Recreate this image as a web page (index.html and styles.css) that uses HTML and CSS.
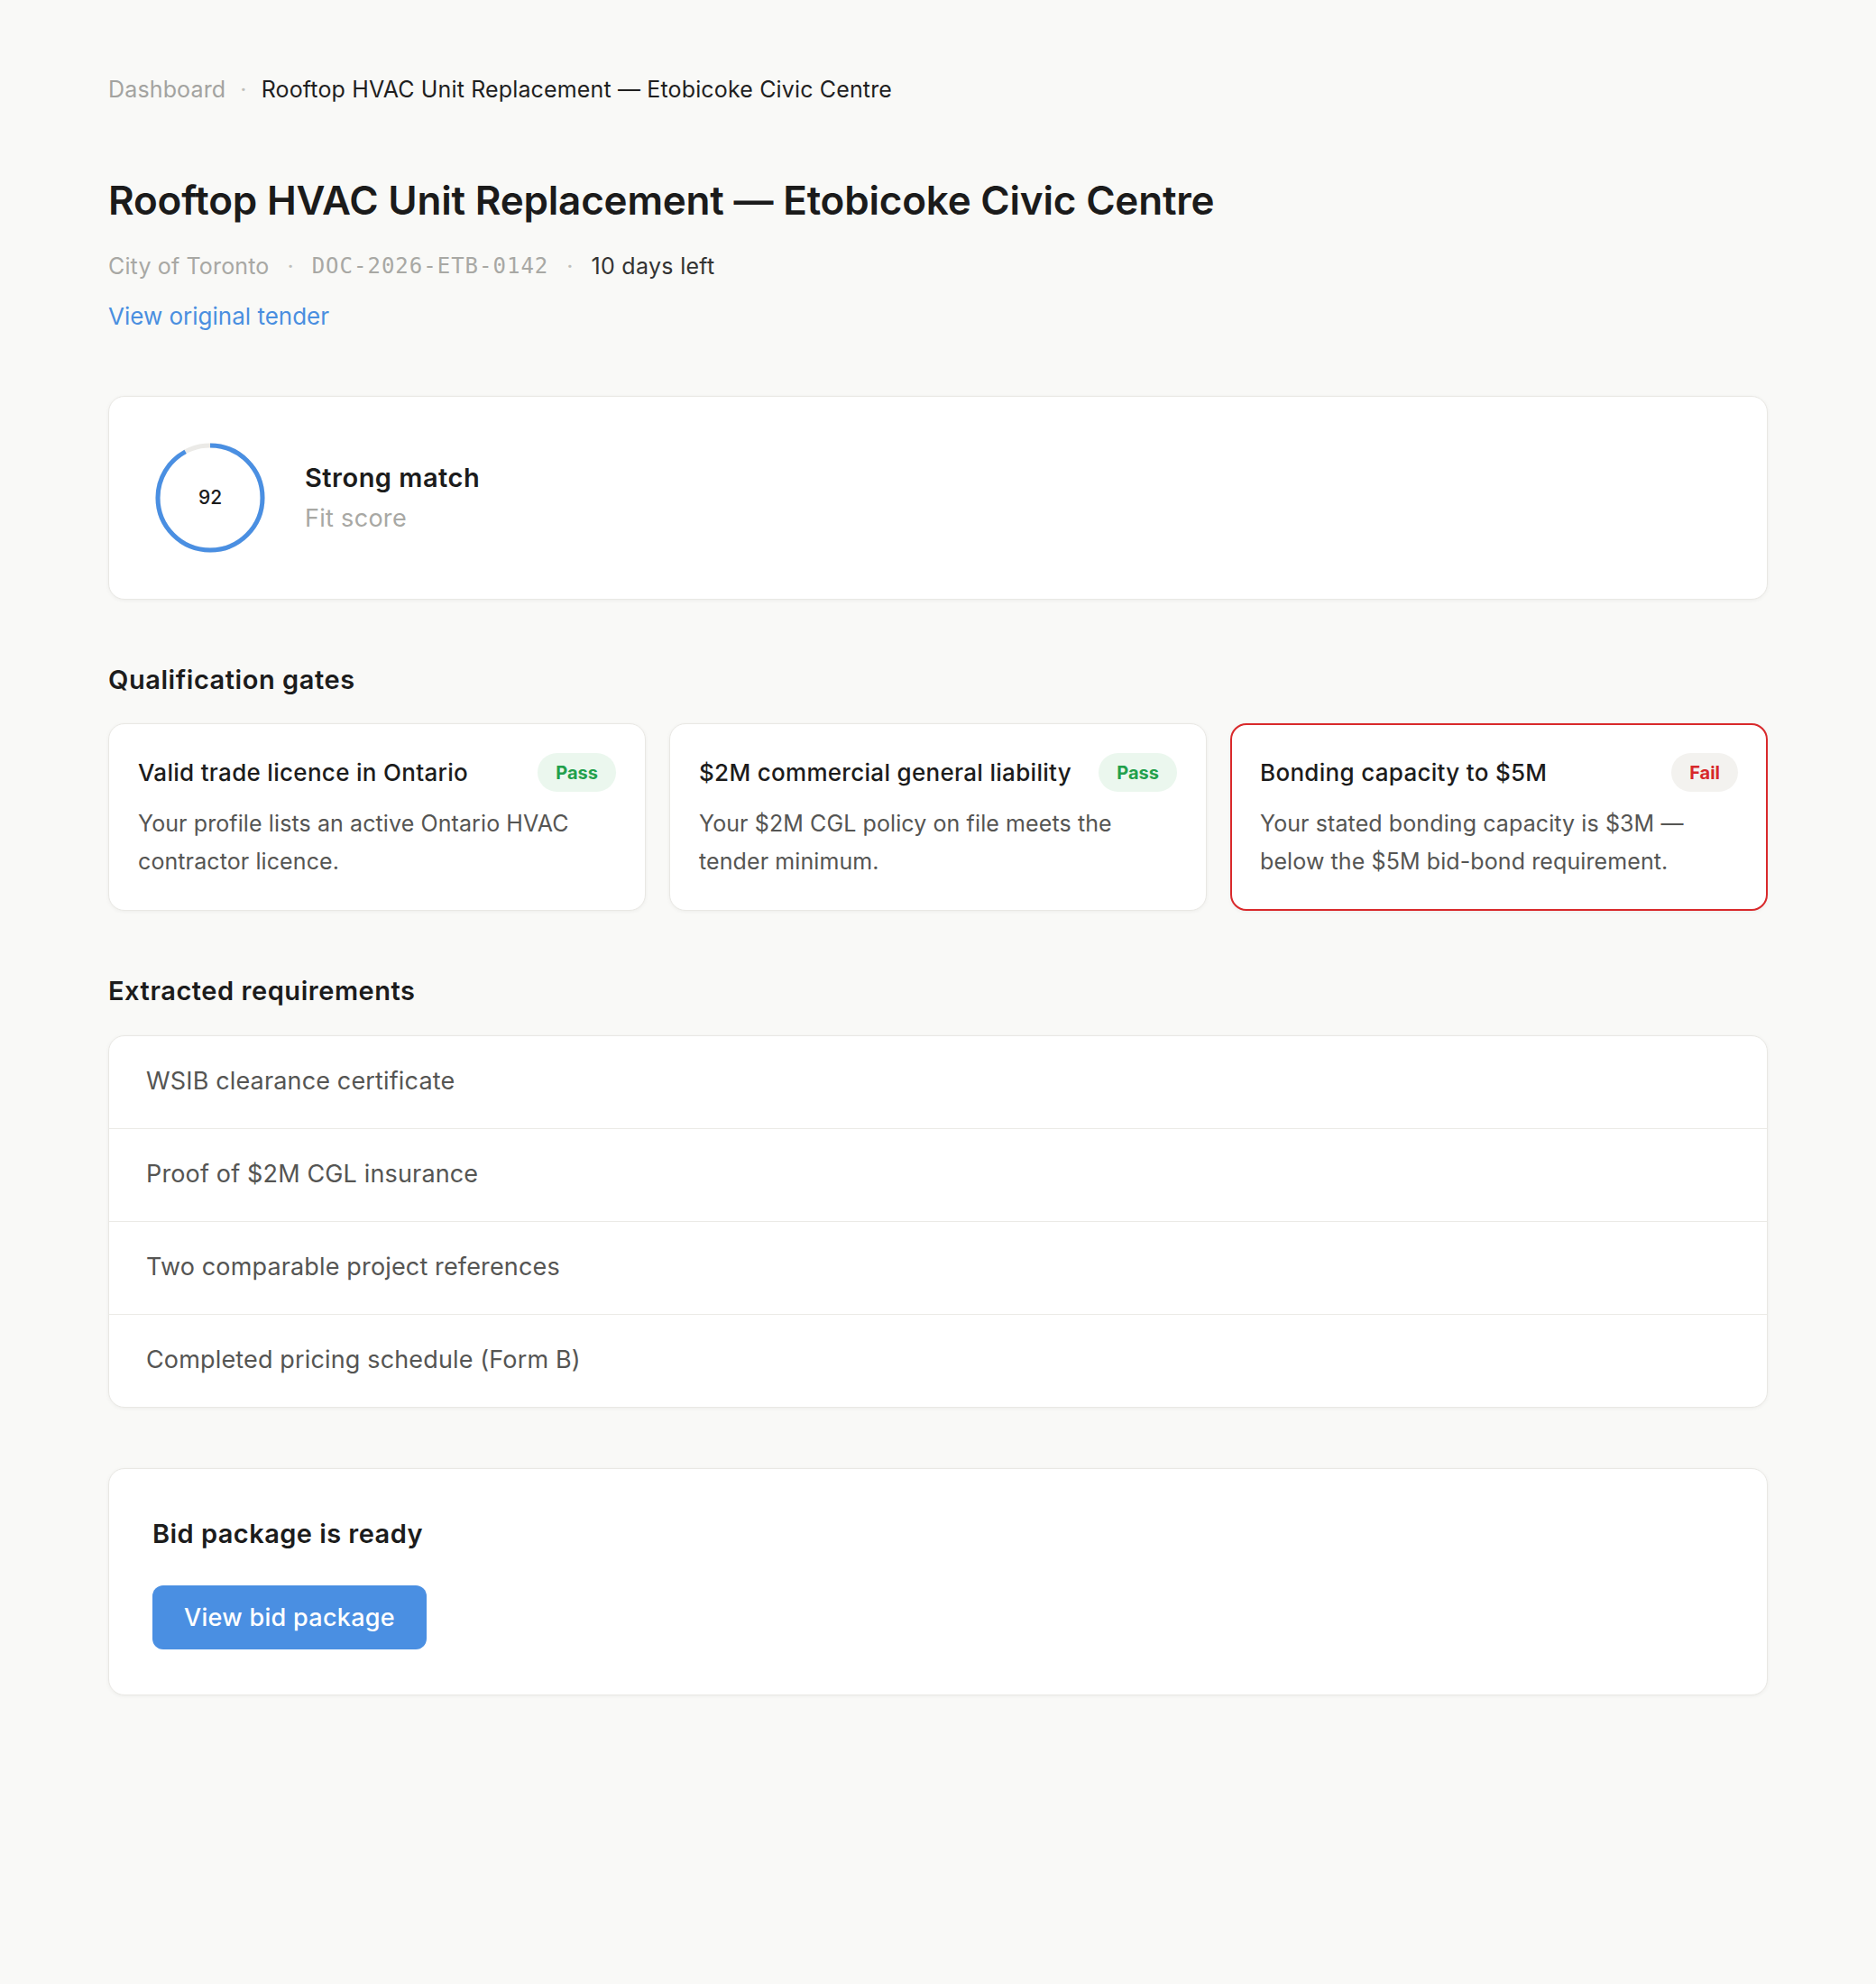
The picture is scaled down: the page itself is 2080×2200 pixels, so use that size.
FILE: index.html
```html
<!DOCTYPE html>
<html lang="en">
<head>
<meta charset="utf-8">
<title>Rooftop HVAC Unit Replacement — Etobicoke Civic Centre</title>
<link rel="stylesheet" href="styles.css">
</head>
<body>
<main class="page">
  <nav class="breadcrumb">
    <a class="crumb-link" href="#">Dashboard</a>
    <span class="dot">·</span>
    <span class="crumb-current">Rooftop HVAC Unit Replacement — Etobicoke Civic Centre</span>
  </nav>

  <h1 class="title">Rooftop HVAC Unit Replacement — Etobicoke Civic Centre</h1>

  <div class="meta">
    <span class="meta-org">City of Toronto</span>
    <span class="dot">·</span>
    <span class="meta-id">DOC-2026-ETB-0142</span>
    <span class="dot">·</span>
    <span class="meta-days">10 days left</span>
  </div>

  <a class="tender-link" href="#">View original tender</a>

  <section class="card score-card">
    <div class="ring">
      <svg class="ring-svg" width="122" height="122" viewBox="0 0 122 122">
        <circle cx="61" cy="61" r="58" fill="none" stroke="#ebeae7" stroke-width="5"/>
        <circle cx="61" cy="61" r="58" fill="none" stroke="#4a8fe2" stroke-width="5"
          stroke-dasharray="335.3 364.4" transform="rotate(-90 61 61)"/>
      </svg>
      <span class="ring-value">92</span>
    </div>
    <div class="score-text">
      <div class="score-label">Strong match</div>
      <div class="score-sub">Fit score</div>
    </div>
  </section>

  <h2 class="section-title">Qualification gates</h2>
  <div class="gates">
    <article class="card gate">
      <div class="gate-head">
        <h3 class="gate-title">Valid trade licence in Ontario</h3>
        <span class="badge badge-pass">Pass</span>
      </div>
      <p class="gate-desc">Your profile lists an active Ontario HVAC contractor licence.</p>
    </article>
    <article class="card gate">
      <div class="gate-head">
        <h3 class="gate-title">$2M commercial general liability</h3>
        <span class="badge badge-pass">Pass</span>
      </div>
      <p class="gate-desc">Your $2M CGL policy on file meets the tender minimum.</p>
    </article>
    <article class="card gate gate-fail">
      <div class="gate-head">
        <h3 class="gate-title">Bonding capacity to $5M</h3>
        <span class="badge badge-fail">Fail</span>
      </div>
      <p class="gate-desc">Your stated bonding capacity is $3M — below the $5M bid-bond requirement.</p>
    </article>
  </div>

  <h2 class="section-title">Extracted requirements</h2>
  <ul class="card req-list">
    <li class="req">WSIB clearance certificate</li>
    <li class="req">Proof of $2M CGL insurance</li>
    <li class="req">Two comparable project references</li>
    <li class="req">Completed pricing schedule (Form B)</li>
  </ul>

  <section class="card bid-card">
    <h2 class="bid-title">Bid package is ready</h2>
    <button class="btn-primary" type="button">View bid package</button>
  </section>
</main>
</body>
</html>
```

FILE: styles.css
```css
* { box-sizing: border-box; }

html, body {
  margin: 0;
  padding: 0;
  background: #f9f9f7;
}

body {
  font-family: Inter, "Noto Sans", "Liberation Sans", sans-serif;
  color: #1c1c1c;
  min-height: 2200px;
}

.page {
  padding: 81px 120px 120px;
  display: flex;
  flex-direction: column;
}

.breadcrumb {
  display: flex;
  align-items: center;
  gap: 16px;
  font-size: 25px;
  line-height: 36px;
  letter-spacing: 0.15px;
}

.crumb-link {
  color: #a3a3a0;
  text-decoration: none;
}

.crumb-current { color: #1f1f1f; }

.dot { color: #c0bfbb; }

.title {
  margin: 77px 0 0;
  font-size: 44px;
  line-height: 56px;
  font-weight: 600;
  letter-spacing: -0.2px;
  color: #1b1b1b;
}

.meta {
  margin-top: 27px;
  display: flex;
  align-items: center;
  gap: 20px;
  font-size: 25px;
  line-height: 36px;
}

.meta-org { color: #a8a8a4; letter-spacing: 0.15px; }

.meta-id {
  font-family: "DejaVu Sans Mono", "Liberation Mono", monospace;
  font-size: 24px;
  color: #a8a8a4;
  letter-spacing: 1px;
}

.meta-days { color: #333; letter-spacing: 0.3px; }

.tender-link {
  margin-top: 20px;
  align-self: flex-start;
  font-size: 26px;
  line-height: 36px;
  color: #4a8fe0;
  text-decoration: none;
}

.card {
  background: #fff;
  border: 1px solid #e9e8e4;
  border-radius: 18px;
  box-shadow: 0 1px 4px rgba(0, 0, 0, 0.05);
}

.score-card {
  margin-top: 70px;
  padding: 51px;
  display: flex;
  align-items: center;
  gap: 44px;
}

.ring {
  position: relative;
  width: 122px;
  height: 122px;
  flex: none;
}

.ring-svg { display: block; }

.ring-value {
  position: absolute;
  inset: 0;
  display: flex;
  align-items: center;
  justify-content: center;
  padding-bottom: 2px;
  font-size: 21px;
  font-weight: 500;
  color: #1c1c1c;
}

.score-label {
  font-size: 29px;
  line-height: 40px;
  font-weight: 600;
  letter-spacing: 0.5px;
  color: #1c1c1c;
}

.score-sub {
  margin-top: 6px;
  font-size: 27px;
  line-height: 38px;
  letter-spacing: 0.3px;
  color: #a8a8a4;
}

.section-title {
  margin: 69px 0 0;
  font-size: 29px;
  line-height: 40px;
  font-weight: 600;
  letter-spacing: 0.55px;
  color: #1c1c1c;
}

.gates {
  margin-top: 28px;
  display: grid;
  grid-template-columns: repeat(3, 1fr);
  gap: 26px;
}

.gate {
  padding: 32px 32px 33px;
}

.gate-head {
  display: flex;
  align-items: center;
  justify-content: space-between;
  gap: 16px;
  height: 43px;
}

.gate-title {
  margin: 0;
  font-size: 26px;
  font-weight: 500;
  letter-spacing: 0.3px;
  color: #1c1c1c;
}

.badge {
  flex: none;
  height: 43px;
  padding: 0 20px;
  border-radius: 22px;
  display: inline-flex;
  align-items: center;
  font-size: 20px;
  font-weight: 700;
}

.badge-pass {
  background: #ebf7ee;
  color: #22a04b;
}

.badge-fail {
  background: #f3f2ef;
  color: #d7282a;
}

.gate-fail {
  border: 2px solid #d9292b;
  padding: 31px 31px 32px;
}

.gate-desc {
  margin: 14px 0 0;
  font-size: 25px;
  line-height: 42px;
  letter-spacing: 0.1px;
  color: #555553;
}

.req-list {
  margin: 29px 0 0;
  padding: 0;
  list-style: none;
  overflow: hidden;
}

.req {
  padding: 32px 41px 34px;
  font-size: 27px;
  line-height: 36px;
  letter-spacing: 0.15px;
  color: #555553;
  border-top: 1px solid #ebeae6;
}

.req:first-child { border-top: 0; }

.bid-card {
  margin-top: 67px;
  padding: 52px 48px 50px;
  display: flex;
  flex-direction: column;
  align-items: flex-start;
}

.bid-title {
  margin: 0;
  font-size: 29px;
  line-height: 40px;
  font-weight: 600;
  letter-spacing: 0.45px;
  color: #1c1c1c;
}

.btn-primary {
  margin-top: 37px;
  height: 71px;
  padding: 0 35px;
  border: 0;
  border-radius: 12px;
  background: #4a8fe2;
  color: #fff;
  font-family: inherit;
  font-size: 27px;
  font-weight: 500;
  letter-spacing: 0.3px;
}
```
